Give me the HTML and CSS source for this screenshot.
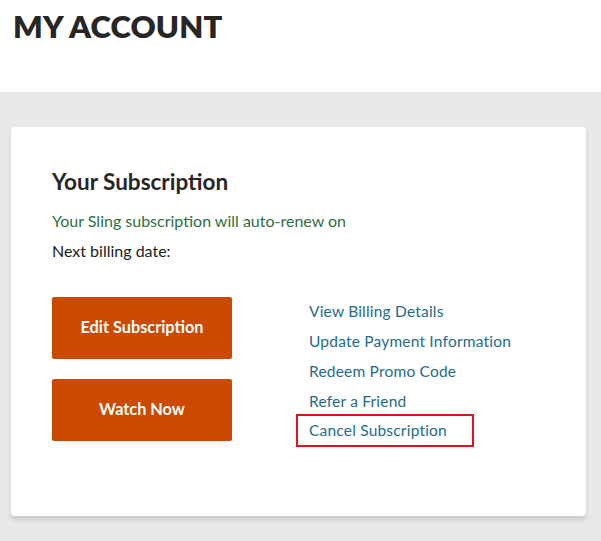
FILE: index.html
```html
<!DOCTYPE html>
<html>
<head>
<meta charset="utf-8">
<link rel="stylesheet" href="styles.css">
</head>
<body>
<header class="page-head">
  <h1 class="page-title">MY ACCOUNT</h1>
</header>
<main class="band">
  <section class="card">
    <h2 class="card-title">Your Subscription</h2>
    <p class="renew">Your Sling subscription will auto-renew on</p>
    <p class="billing">Next billing date:</p>
    <div class="actions">
      <div class="buttons">
        <a class="btn">Edit Subscription</a>
        <a class="btn">Watch Now</a>
      </div>
      <ul class="links">
        <li><a>View Billing Details</a></li>
        <li><a>Update Payment Information</a></li>
        <li><a>Redeem Promo Code</a></li>
        <li><a>Refer a Friend</a></li>
        <li class="highlight"><a>Cancel Subscription</a></li>
      </ul>
    </div>
  </section>
</main>
</body>
</html>
```
FILE: styles.css
```css
html, body { margin: 0; padding: 0; background: #fff; }
body { font-family: "Lato", "Open Sans", sans-serif; color: #222; }
.page-head { height: 92px; padding: 0 13px; box-sizing: border-box; }
.page-title { margin: 0; padding-top: 8px; font-size: 31px; font-weight: 800; color: #262626; letter-spacing: 0.2px; line-height: 36px; }
.band { background: #e8e8e8; padding: 35px 15px 25px 11px; min-height: 449px; box-sizing: border-box; }
.card { background: #fff; border-radius: 4px; box-shadow: 0 4px 4px rgba(0,0,0,0.12); padding: 42px 41px 60px 41px; height: 389px; box-sizing: border-box; }
.card-title { margin: 0; font-size: 22.5px; font-weight: 700; color: #262626; line-height: 26px; }
.renew { margin: 16px 0 0; font-size: 16px; color: #2f6f3f; line-height: 20px; }
.billing { margin: 10px 0 0; font-size: 16px; color: #222; line-height: 20px; }
.actions { display: flex; margin-top: 36px; }
.buttons { display: flex; flex-direction: column; gap: 20px; width: 180px; }
.btn { display: flex; align-items: center; justify-content: center; height: 62px; padding-bottom: 3px; box-sizing: border-box; background: #cc4a00; color: #fff; font-weight: 700; font-size: 16.3px; border-radius: 2px; }
.links { list-style: none; margin: -1px 0 0 77px; padding: 0; }
.links li { height: 30px; line-height: 30px; font-size: 15.5px; color: #1f6b8c; letter-spacing: 0.2px; }
.links li a { display: inline-block; }
.links .highlight { margin-left: -13px; padding-left: 11px; width: 163px; height: 29px; border: 2px solid #e3101c; line-height: 28px; margin-top: -2px; }
```
